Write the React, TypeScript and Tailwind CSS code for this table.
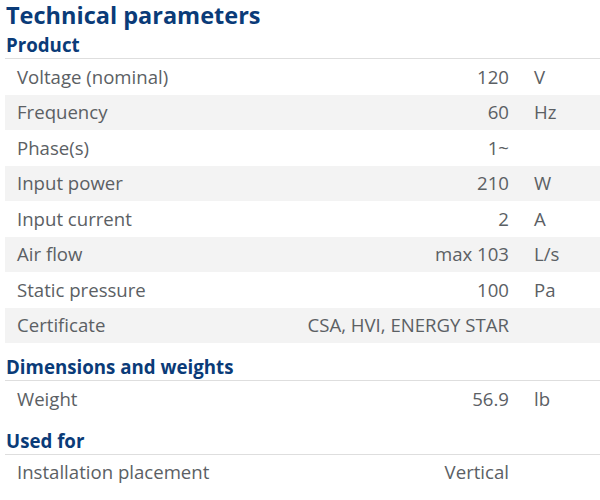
import React from "react";

type Row = { label: string; value: string; unit?: string };

const sections: { title: string; rows: Row[] }[] = [
  {
    title: "Product",
    rows: [
      { label: "Voltage (nominal)", value: "120", unit: "V" },
      { label: "Frequency", value: "60", unit: "Hz" },
      { label: "Phase(s)", value: "1~" },
      { label: "Input power", value: "210", unit: "W" },
      { label: "Input current", value: "2", unit: "A" },
      { label: "Air flow", value: "max 103", unit: "L/s" },
      { label: "Static pressure", value: "100", unit: "Pa" },
      { label: "Certificate", value: "CSA, HVI, ENERGY STAR" },
    ],
  },
  {
    title: "Dimensions and weights",
    rows: [{ label: "Weight", value: "56.9", unit: "lb" }],
  },
  {
    title: "Used for",
    rows: [{ label: "Installation placement", value: "Vertical" }],
  },
];

export default function App() {
  return (
    <div
      className="w-[600px] h-[500px] overflow-hidden bg-white"
      style={{ fontFamily: '"Open Sans", "Noto Sans", sans-serif' }}
    >
      <h1 className="pl-[6px] text-[23.5px] leading-[30px] font-bold text-[#0a3b78]">
        Technical parameters
      </h1>
      {sections.map((s, si) => (
        <div key={s.title} className={si === 0 ? "mt-[2px]" : "mt-[11px]"}>
          <h2 className="pl-[6px] text-[18.7px] leading-[26px] font-bold text-[#0a3b78]">
            {s.title}
          </h2>
          <div className="ml-[5px] border-t border-[#dedede]">
            {s.rows.map((r, i) => (
              <div
                key={r.label}
                className={`flex items-center h-[35.5px] text-[18.6px] text-[#5b6064] ${
                  i % 2 === 1 ? "bg-[#f3f3f3]" : "bg-white"
                }`}
              >
                <div className="flex-1 pl-[12px] whitespace-nowrap">{r.label}</div>
                <div className="text-right whitespace-nowrap">{r.value}</div>
                <div className="w-[91px] pl-[25px] shrink-0">{r.unit ?? ""}</div>
              </div>
            ))}
          </div>
        </div>
      ))}
    </div>
  );
}
